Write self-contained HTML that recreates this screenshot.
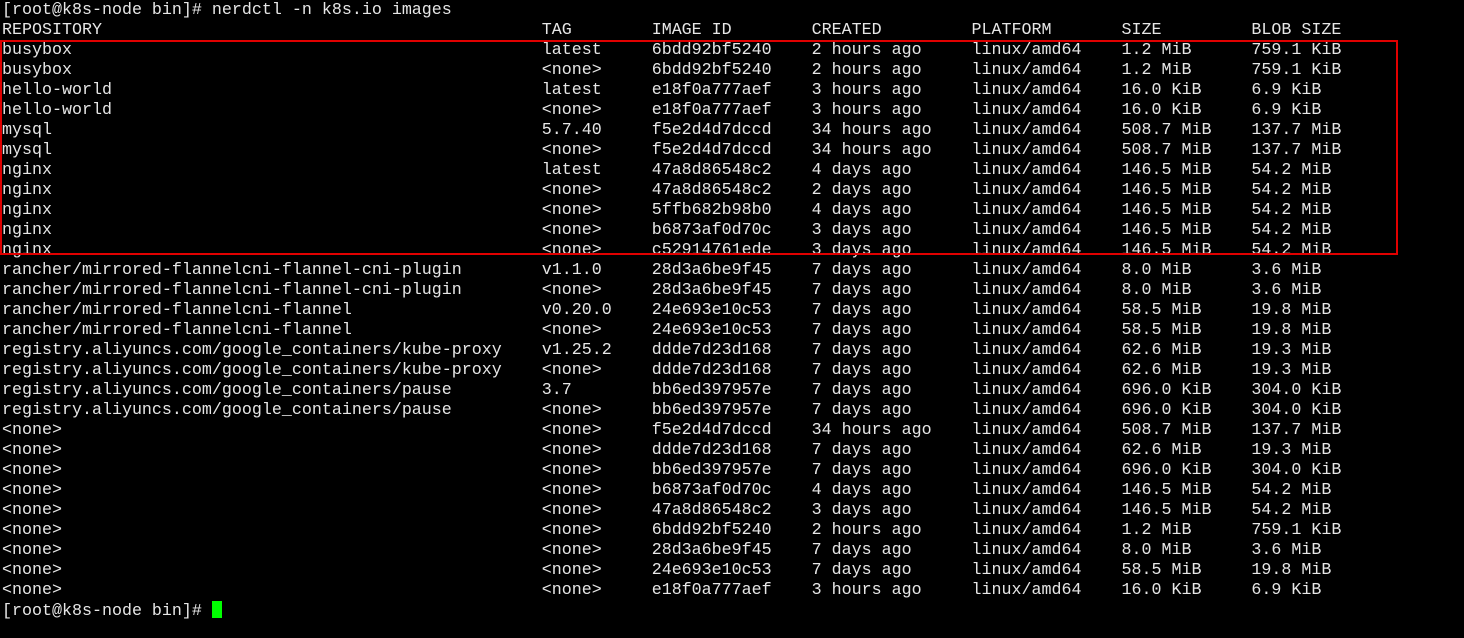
<!DOCTYPE html>
<html><head><style>
html,body{margin:0;padding:0;background:#000;width:1464px;height:638px;overflow:hidden}
pre{position:absolute;left:2px;top:1px;margin:0;font-family:"Liberation Mono","DejaVu Sans Mono",monospace;font-size:16.67px;line-height:20px;color:#e6e6e6}
.box{position:absolute;left:0;top:40px;width:1394px;height:211px;border:2px solid #e00000}
.cur{display:inline-block;width:10px;height:17px;background:#00ff00;vertical-align:-3px}
</style></head><body>
<pre>[root@k8s-node bin]# nerdctl -n k8s.io images
REPOSITORY                                            TAG        IMAGE ID        CREATED         PLATFORM       SIZE         BLOB SIZE
busybox                                               latest     6bdd92bf5240    2 hours ago     linux/amd64    1.2 MiB      759.1 KiB
busybox                                               &lt;none&gt;     6bdd92bf5240    2 hours ago     linux/amd64    1.2 MiB      759.1 KiB
hello-world                                           latest     e18f0a777aef    3 hours ago     linux/amd64    16.0 KiB     6.9 KiB
hello-world                                           &lt;none&gt;     e18f0a777aef    3 hours ago     linux/amd64    16.0 KiB     6.9 KiB
mysql                                                 5.7.40     f5e2d4d7dccd    34 hours ago    linux/amd64    508.7 MiB    137.7 MiB
mysql                                                 &lt;none&gt;     f5e2d4d7dccd    34 hours ago    linux/amd64    508.7 MiB    137.7 MiB
nginx                                                 latest     47a8d86548c2    4 days ago      linux/amd64    146.5 MiB    54.2 MiB
nginx                                                 &lt;none&gt;     47a8d86548c2    2 days ago      linux/amd64    146.5 MiB    54.2 MiB
nginx                                                 &lt;none&gt;     5ffb682b98b0    4 days ago      linux/amd64    146.5 MiB    54.2 MiB
nginx                                                 &lt;none&gt;     b6873af0d70c    3 days ago      linux/amd64    146.5 MiB    54.2 MiB
nginx                                                 &lt;none&gt;     c52914761ede    3 days ago      linux/amd64    146.5 MiB    54.2 MiB
rancher/mirrored-flannelcni-flannel-cni-plugin        v1.1.0     28d3a6be9f45    7 days ago      linux/amd64    8.0 MiB      3.6 MiB
rancher/mirrored-flannelcni-flannel-cni-plugin        &lt;none&gt;     28d3a6be9f45    7 days ago      linux/amd64    8.0 MiB      3.6 MiB
rancher/mirrored-flannelcni-flannel                   v0.20.0    24e693e10c53    7 days ago      linux/amd64    58.5 MiB     19.8 MiB
rancher/mirrored-flannelcni-flannel                   &lt;none&gt;     24e693e10c53    7 days ago      linux/amd64    58.5 MiB     19.8 MiB
registry.aliyuncs.com/google_containers/kube-proxy    v1.25.2    ddde7d23d168    7 days ago      linux/amd64    62.6 MiB     19.3 MiB
registry.aliyuncs.com/google_containers/kube-proxy    &lt;none&gt;     ddde7d23d168    7 days ago      linux/amd64    62.6 MiB     19.3 MiB
registry.aliyuncs.com/google_containers/pause         3.7        bb6ed397957e    7 days ago      linux/amd64    696.0 KiB    304.0 KiB
registry.aliyuncs.com/google_containers/pause         &lt;none&gt;     bb6ed397957e    7 days ago      linux/amd64    696.0 KiB    304.0 KiB
&lt;none&gt;                                                &lt;none&gt;     f5e2d4d7dccd    34 hours ago    linux/amd64    508.7 MiB    137.7 MiB
&lt;none&gt;                                                &lt;none&gt;     ddde7d23d168    7 days ago      linux/amd64    62.6 MiB     19.3 MiB
&lt;none&gt;                                                &lt;none&gt;     bb6ed397957e    7 days ago      linux/amd64    696.0 KiB    304.0 KiB
&lt;none&gt;                                                &lt;none&gt;     b6873af0d70c    4 days ago      linux/amd64    146.5 MiB    54.2 MiB
&lt;none&gt;                                                &lt;none&gt;     47a8d86548c2    3 days ago      linux/amd64    146.5 MiB    54.2 MiB
&lt;none&gt;                                                &lt;none&gt;     6bdd92bf5240    2 hours ago     linux/amd64    1.2 MiB      759.1 KiB
&lt;none&gt;                                                &lt;none&gt;     28d3a6be9f45    7 days ago      linux/amd64    8.0 MiB      3.6 MiB
&lt;none&gt;                                                &lt;none&gt;     24e693e10c53    7 days ago      linux/amd64    58.5 MiB     19.8 MiB
&lt;none&gt;                                                &lt;none&gt;     e18f0a777aef    3 hours ago     linux/amd64    16.0 KiB     6.9 KiB
[root@k8s-node bin]# <span class="cur"></span></pre>
<div class="box"></div>
</body></html>
